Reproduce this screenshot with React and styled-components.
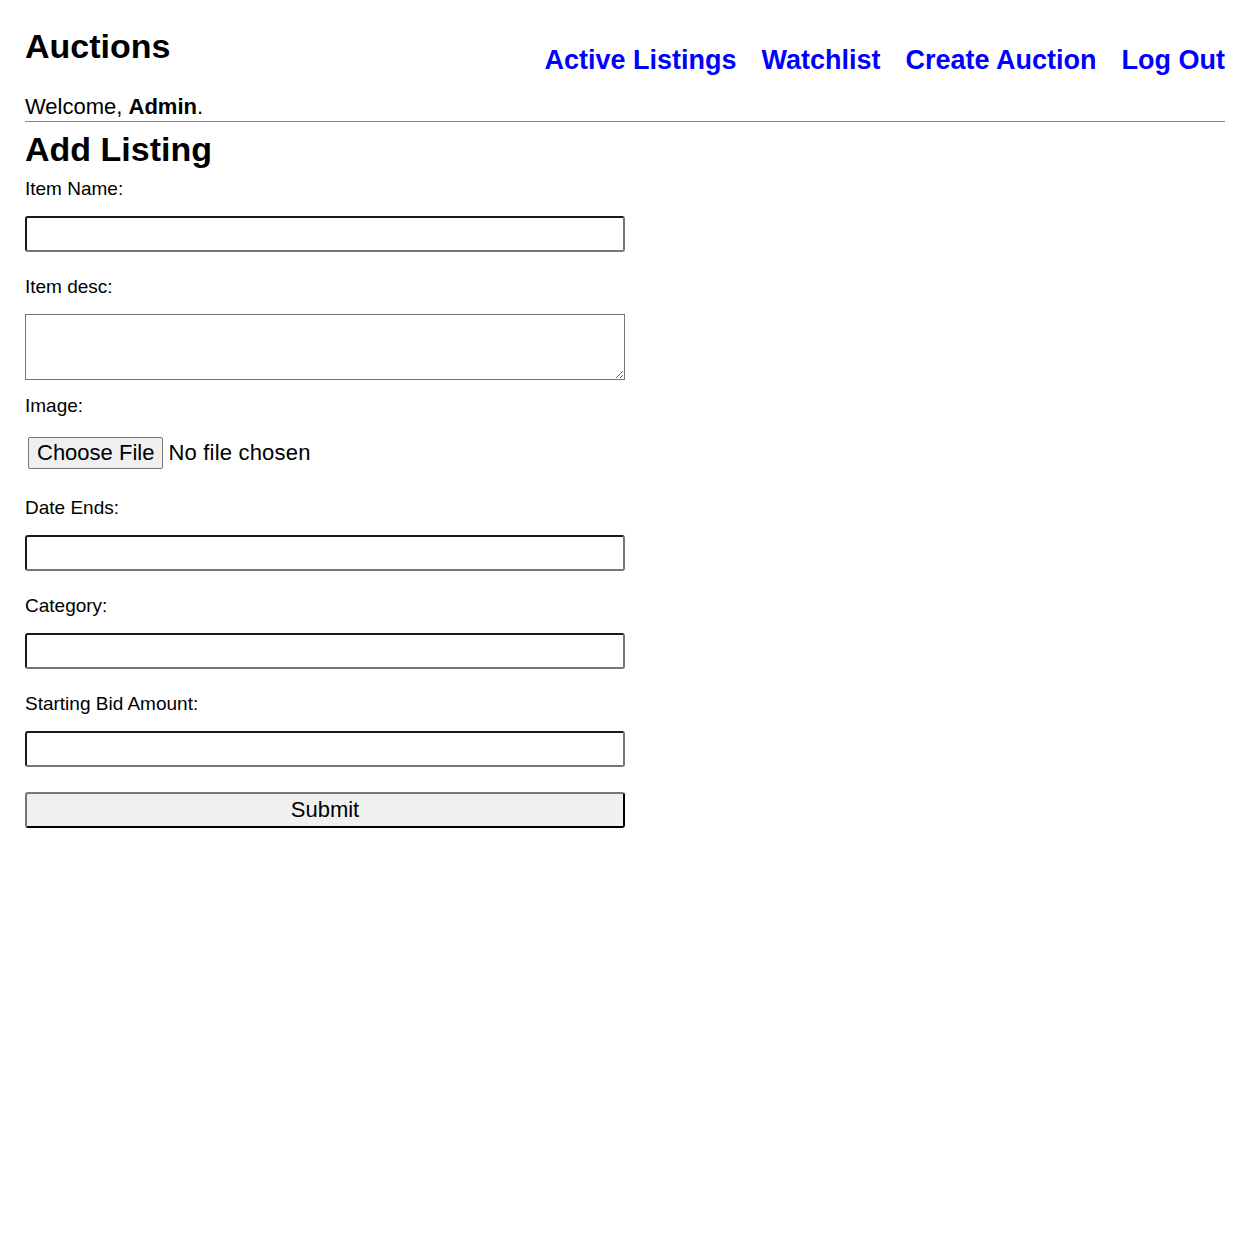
import React from 'react'
import styled, { createGlobalStyle } from 'styled-components'

const GlobalStyle = createGlobalStyle`
body {
  margin: 0;
  background: #fff;
  color: #000;
  font-family: "Liberation Sans", Arial, sans-serif;
}
`

export const Page = styled.div`
padding: 26px 24px 40px 25px;
`

export const Header = styled.header`
display: flex;
justify-content: space-between;
align-items: flex-start;
`

export const Title = styled.h1`
margin: 0;
font-size: 34px;
line-height: 40px;
font-weight: bold;
`

export const Nav = styled.nav`
display: flex;
gap: 25px;
margin-top: 18px;
`

export const NavLink = styled.a`
font-size: 27px;
line-height: 32px;
font-weight: bold;
color: #0000ff;
text-decoration: none;
`

export const Welcome = styled.div`
margin-top: 18px;
font-size: 22px;
line-height: 26px;
`

export const Rule = styled.hr`
margin: 1px 0 0;
border: 0;
border-top: 1px solid #8a8a8a;
height: 0;
`

export const Heading = styled.h2`
margin: 7px 0 0;
font-size: 34px;
line-height: 40px;
font-weight: bold;
`

export const Form = styled.form`
display: flex;
flex-direction: column;
align-items: flex-start;
width: 600px;
`

export const Label = styled.label`
display: block;
margin-top: ${(p) => p.$top || 0}px;
font-size: 19px;
line-height: 22px;
`

export const TextInput = styled.input`
box-sizing: border-box;
width: 600px;
height: 36px;
margin-top: 16px;
padding: 0 6px;
font-size: 19px;
font-family: inherit;
border-style: solid;
border-width: 2px;
border-color: #1a1a1a #767676 #767676 #1a1a1a;
border-radius: 3px;
background: #fff;
`

export const TextArea = styled.textarea`
display: block;
box-sizing: border-box;
width: 600px;
height: 66px;
margin-top: 16px;
padding: 4px;
font-size: 19px;
font-family: inherit;
border: 1px solid #767676;
border-radius: 0;
`

export const FileRow = styled.div`
display: flex;
align-items: center;
height: 36px;
margin-top: 18px;
font-size: 22px;
`

export const FileButton = styled.span`
box-sizing: border-box;
height: 32px;
margin-left: 3px;
padding: 0 8px;
display: flex;
align-items: center;
background: #efefef;
border: 1px solid #767676;
border-radius: 2px;
`

export const FileText = styled.span`
margin-left: 5px;
letter-spacing: 0.2px;
`

export const Submit = styled.button`
box-sizing: border-box;
width: 600px;
height: 36px;
margin-top: 25px;
font-size: 22px;
font-family: inherit;
color: #000;
background: #f0f0f0;
border-style: solid;
border-width: 2px;
border-color: #767676 #000 #000 #767676;
border-radius: 3px;
`

const fields = [
  { label: 'Date Ends:', top: 26 },
  { label: 'Category:', top: 24 },
  { label: 'Starting Bid Amount:', top: 24 },
]

const App = () => {
  return (
    <Page>
      <GlobalStyle />
      <Header>
        <Title>Auctions</Title>
        <Nav>
          <NavLink href="#">Active Listings</NavLink>
          <NavLink href="#">Watchlist</NavLink>
          <NavLink href="#">Create Auction</NavLink>
          <NavLink href="#">Log Out</NavLink>
        </Nav>
      </Header>
      <Welcome>
        Welcome, <strong>Admin</strong>.
      </Welcome>
      <Rule />
      <Heading>Add Listing</Heading>
      <Form onSubmit={(e) => e.preventDefault()}>
        <Label $top={9}>Item Name:</Label>
        <TextInput type="text" />
        <Label $top={24}>Item desc:</Label>
        <TextArea />
        <Label $top={15}>Image:</Label>
        <FileRow>
          <FileButton>Choose File</FileButton>
          <FileText>No file chosen</FileText>
        </FileRow>
        {fields.map((f, index) => (
          <React.Fragment key={index}>
            <Label $top={f.top}>{f.label}</Label>
            <TextInput type="text" />
          </React.Fragment>
        ))}
        <Submit type="submit">Submit</Submit>
      </Form>
    </Page>
  )
}

export default App
